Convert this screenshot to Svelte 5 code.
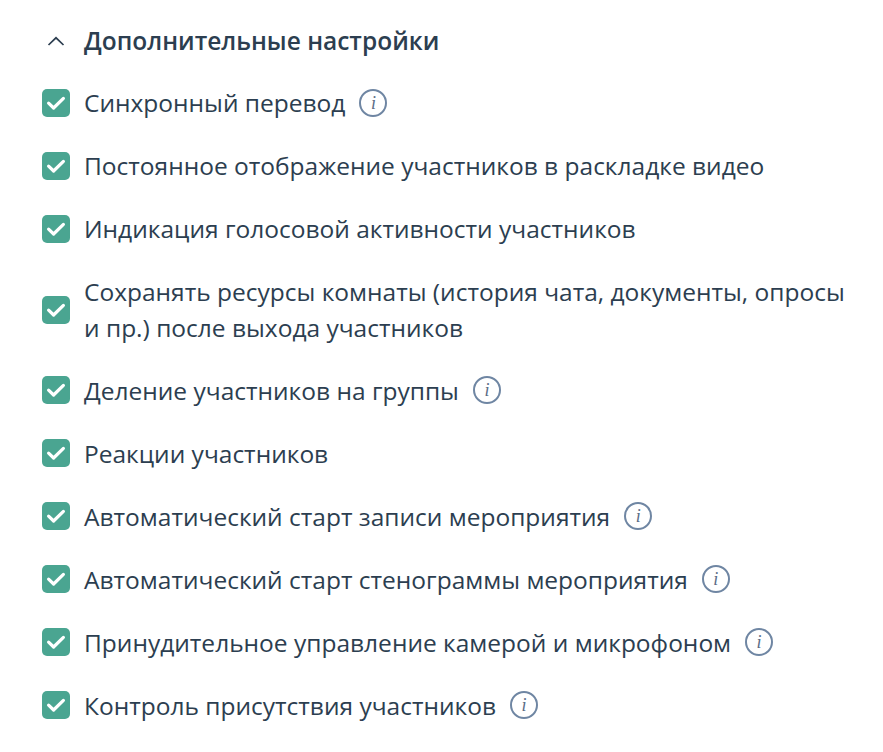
<script>
	const items = [
		{ text: 'Синхронный перевод', info: true },
		{ text: 'Постоянное отображение участников в раскладке видео' },
		{ text: 'Индикация голосовой активности участников' },
		{ text: 'Сохранять ресурсы комнаты (история чата, документы, опросы и пр.) после выхода участников' },
		{ text: 'Деление участников на группы', info: true },
		{ text: 'Реакции участников' },
		{ text: 'Автоматический старт записи мероприятия', info: true },
		{ text: 'Автоматический старт стенограммы мероприятия', info: true },
		{ text: 'Принудительное управление камерой и микрофоном', info: true },
		{ text: 'Контроль присутствия участников', info: true }
	];
</script>

<div class="settings">
	<div class="header">
		<svg class="chevron" width="18" height="10" viewBox="0 0 18 10" fill="none">
			<path d="M1.5 9 L9 1.8 L16.5 9" stroke="#2c3e50" stroke-width="1.7" />
		</svg>
		<h3>Дополнительные настройки</h3>
	</div>

	<ul>
		{#each items as item}
			<li>
				<span class="check">
					<svg width="20" height="16" viewBox="0 0 20 16" fill="none">
						<path d="M2.6 8.2 L7.6 13 L17.4 3.4" stroke="#fff" stroke-width="3.2" stroke-linecap="round" stroke-linejoin="round" />
					</svg>
				</span>
				<span class="label">
					<span>{item.text}</span>
					{#if item.info}<span class="info">i</span>{/if}
				</span>
			</li>
		{/each}
	</ul>
</div>

<style>
	:global(body) {
		margin: 0;
		background: #fff;
	}
	.settings {
		width: 883px;
		height: 752px;
		box-sizing: border-box;
		padding: 23px 30px 0 42px;
		font-family: 'Open Sans', sans-serif;
		color: #2c3e50;
	}
	.header {
		display: flex;
		align-items: center;
		height: 36px;
		margin-bottom: 26px;
	}
	.chevron {
		margin-left: 5px;
		margin-right: 19px;
	}
	h3 {
		margin: 0;
		font-size: 24.5px;
		font-weight: 600;
		line-height: 36px;
	}
	ul {
		list-style: none;
		margin: 0;
		padding: 0;
		display: flex;
		flex-direction: column;
		gap: 27.5px;
	}
	li {
		display: flex;
		align-items: center;
		font-size: 24.5px;
		line-height: 35.5px;
	}
	.check {
		flex: none;
		width: 28px;
		height: 28px;
		margin-right: 14px;
		border-radius: 5px;
		background: #4aa591;
		display: flex;
		align-items: center;
		justify-content: center;
	}
	.label {
		display: flex;
		align-items: center;
		gap: 14px;
	}
	.info {
		flex: none;
		display: flex;
		align-items: center;
		justify-content: center;
		box-sizing: border-box;
		width: 28px;
		height: 28px;
		border: 2px solid #6f86a3;
		border-radius: 50%;
		font-family: 'Liberation Serif', serif;
		font-style: italic;
		font-size: 18px;
		line-height: 1;
		color: #5a6c86;
	}
</style>
